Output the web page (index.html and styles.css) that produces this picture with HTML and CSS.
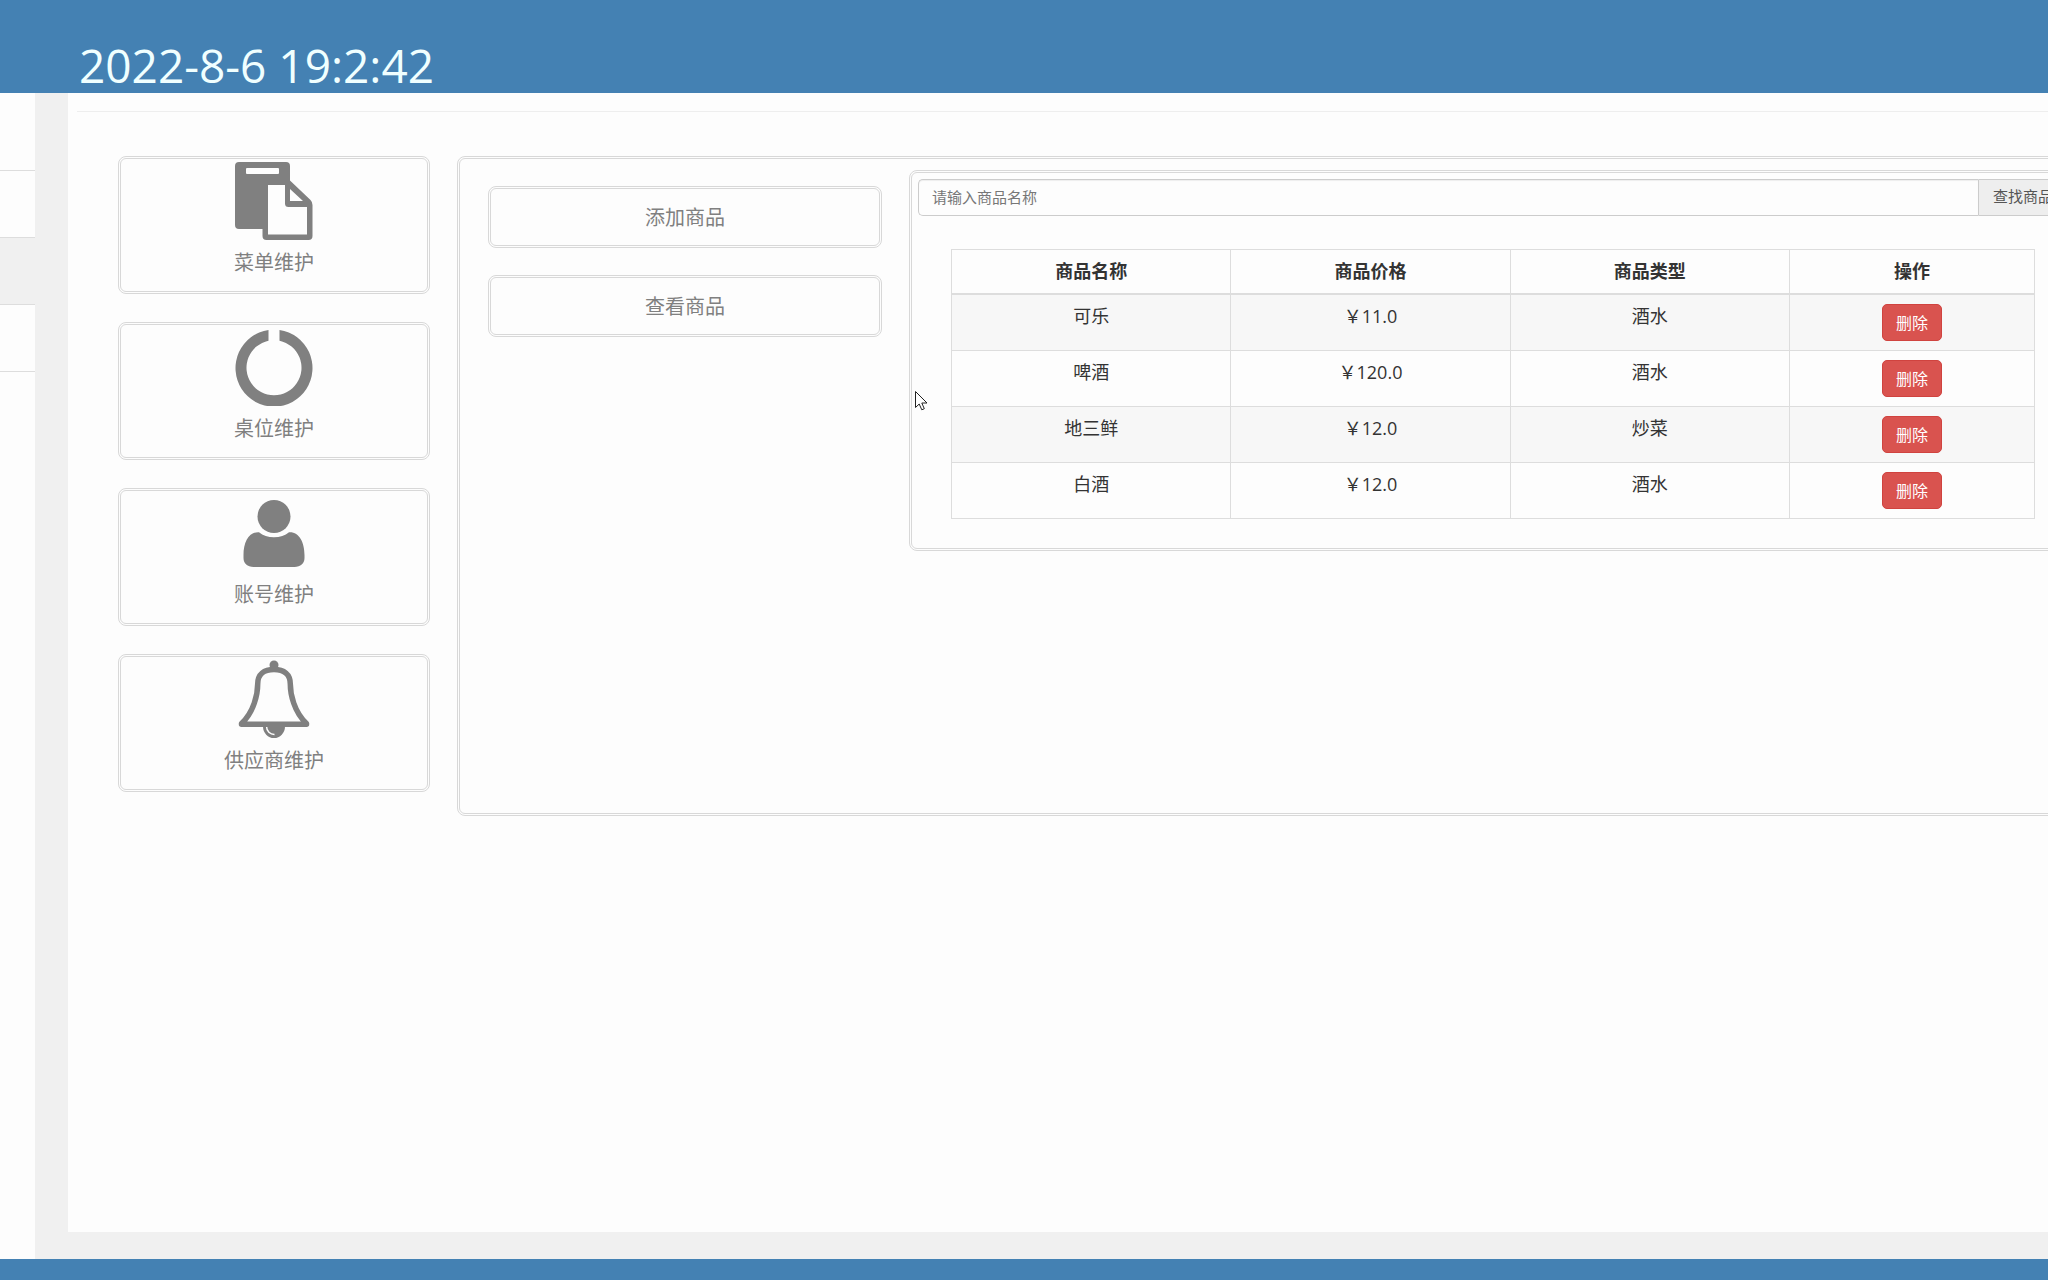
FILE: index.html
```html
<!DOCTYPE html>
<html lang="zh-CN">
<head>
<meta charset="utf-8">
<meta name="viewport" content="width=device-width, initial-scale=1">
<title>商品管理</title>
<link rel="stylesheet" href="styles.css">
</head>
<body>
<header class="topbar"><time class="clock">2022-8-6 19:2:42</time></header>
<div class="body">
  <aside class="sidebar">
    <ul class="side-list">
      <li class="side-item"></li>
      <li class="side-item"></li>
      <li class="side-item active"></li>
      <li class="side-item"></li>
    </ul>
  </aside>
  <main class="main">
    <div class="workspace">
      <nav class="cards">
        <button type="button" class="card">
          <svg class="icon" viewBox="0 0 78 78" aria-hidden="true">
            <path fill-rule="evenodd" d="M4 0H51a4 4 0 0 1 4 4V18.500L75.500 38Q77.500 40 77.500 43V74a4 4 0 0 1-4 4H31.500a4 4 0 0 1-4-4V67H4a4 4 0 0 1-4-4V4a4 4 0 0 1 4-4ZM12 6a1 1 0 0 0-1 1V11a1 1 0 0 0 1 1H43a1 1 0 0 0 1-1V7a1 1 0 0 0-1-1ZM33 23V72.500H72V45H53.500a3.500 3.500 0 0 1-3.500-3.500V23ZM55 27V39H68Z"/>
          </svg>
          <span class="label">菜单维护</span>
        </button>
        <button type="button" class="card">
          <svg class="icon" viewBox="0 0 78 78" aria-hidden="true">
            <path d="M33.500 2A38.500 38.500 0 1 0 44.500 2V12.800A27.500 27.500 0 1 1 33.500 12.800Z"/>
          </svg>
          <span class="label">桌位维护</span>
        </button>
        <button type="button" class="card">
          <svg class="icon" viewBox="0 0 78 78" aria-hidden="true">
            <circle cx="39" cy="22.500" r="16.500"/>
            <path d="M24 38.200C28 41.500 33 43.200 39 43.200S50 41.500 54 38.200C64 37.500 69.500 48 69.500 61V64C69.500 69.500 65.500 73 59.500 73H18.500C12.500 73 8.500 69.500 8.500 64V61C8.500 48 14 37.500 24 38.200Z"/>
          </svg>
          <span class="label">账号维护</span>
        </button>
        <button type="button" class="card">
          <svg class="icon" viewBox="0 0 78 78" aria-hidden="true">
            <circle cx="39" cy="5" r="4.500"/>
            <path class="line" d="M6.500 63.500C19 52 22.700 34 22.700 24C22.700 14 29 9.500 39 9.500S55.300 14 55.300 24C55.300 34 59 52 71.500 63.500V64.300H6.500Z"/>
            <path fill-rule="evenodd" d="M28 66.500H50A11 11.500 0 0 1 28 66.500ZM30.800 66.500A8.500 8.800 0 0 0 39.500 75.200V73.700A7 7.200 0 0 1 32.300 66.500Z"/>
          </svg>
          <span class="label">供应商维护</span>
        </button>
      </nav>
      <section class="panel">
        <div class="actions">
          <button type="button" class="action">添加商品</button>
          <button type="button" class="action">查看商品</button>
        </div>
        <div class="results">
          <form class="search">
            <input class="search-input" type="text" placeholder="请输入商品名称" aria-label="商品名称">
            <button type="button" class="search-button">查找商品</button>
          </form>
          <table class="goods">
            <thead>
              <tr><th>商品名称</th><th>商品价格</th><th>商品类型</th><th class="ops">操作</th></tr>
            </thead>
            <tbody>
              <tr><td>可乐</td><td>￥11.0</td><td>酒水</td><td><button type="button" class="delete">删除</button></td></tr>
              <tr><td>啤酒</td><td>￥120.0</td><td>酒水</td><td><button type="button" class="delete">删除</button></td></tr>
              <tr><td>地三鲜</td><td>￥12.0</td><td>炒菜</td><td><button type="button" class="delete">删除</button></td></tr>
              <tr><td>白酒</td><td>￥12.0</td><td>酒水</td><td><button type="button" class="delete">删除</button></td></tr>
            </tbody>
          </table>
          <svg class="cursor" viewBox="0 0 13 20" aria-hidden="true"><path d="M.5.500V16.500L4.200 13L6.800 18.800L9.300 17.700L6.800 12H12Z"/></svg>
        </div>
      </section>
    </div>
  </main>
</div>
<footer class="bottombar"></footer>
</body>
</html>
```
FILE: styles.css
```css
* { box-sizing: border-box; }

body {
  margin: 0;
  min-height: 100vh;
  display: flex;
  flex-direction: column;
  overflow-x: hidden;
  background: #f0f0f0;
  color: #333;
  font-family: "Open Sans", "Noto Sans CJK SC", sans-serif;
  font-size: 18px;
  line-height: 25px;
}

button, input { font-family: inherit; }

.topbar {
  height: 93px;
  padding: 35px 79px 0;
  background: #4481b3;
}

.clock {
  display: block;
  color: #f0ffff;
  font-size: 46px;
  font-weight: 500;
  line-height: 60px;
}

.body { flex: 1; display: flex; }

.sidebar { width: 35px; background: #fdfdfd; }

.side-list {
  width: 35px;
  margin: 0;
  padding: 11px 0 0;
  list-style: none;
}

.side-item { height: 67px; border-bottom: 1px solid #ddd; }
.side-item.active { background: #f0f0f0; }

.main {
  flex: 1;
  min-width: 0;
  margin: 0 0 27px 33px;
  padding: 18px 0 0 9px;
  overflow: hidden;
  background: #fdfdfd;
}

.workspace {
  display: grid;
  grid-template-columns: 312px 1fr;
  align-items: start;
  gap: 27px;
  margin-right: -43px;
  padding: 44px 0 0 41px;
  border-top: 1px solid #eee;
}

.cards { display: grid; gap: 28px; }

.card, .action, .panel, .results {
  border: 3px double #d8d8d8;
  border-radius: 8px;
  background: #fdfdfd;
}

.card, .action {
  color: #808080;
  font-size: 20px;
  line-height: 28px;
}

.card {
  height: 138px;
  padding: 3px 0 0;
  display: flex;
  flex-direction: column;
  align-items: center;
  gap: 9px;
}

.icon { width: 78px; height: 78px; fill: #808080; }
.line { fill: none; stroke: #808080; stroke-width: 5.5px; stroke-linejoin: round; }

.panel {
  min-height: 660px;
  padding: 11px 11px 11px 28px;
  display: grid;
  grid-template-columns: 394px 1fr;
  align-items: start;
  gap: 27px;
}

.actions { display: grid; gap: 27px; padding-top: 16px; }
.action { height: 62px; padding: 1px 0 0; }

.results { position: relative; padding: 6px 6px 29px; }

.search { display: flex; }

.search-input, .search-button {
  height: 37px;
  padding: 0 13px 2px;
  border: 1px solid #ccc;
  font-size: 15px;
  line-height: 21px;
}

.search-input {
  flex: 1;
  min-width: 0;
  border-right: 0;
  border-radius: 5px 0 0 5px;
  background: #fdfdfd;
  box-shadow: inset 0 1px 1px #eee;
}

.search-input::placeholder { color: #777; opacity: 1; }

.search-button {
  width: 90px;
  border-radius: 0 5px 5px 0;
  background: #eee;
  color: #555;
}

.goods {
  width: calc(100% - 66px);
  margin: 33px 33px 0;
  border-collapse: collapse;
  table-layout: fixed;
  text-align: center;
}

.goods th, .goods td {
  padding: 9px;
  border: 1px solid #ddd;
  vertical-align: top;
}

.goods thead th { border-bottom-width: 2px; }
.goods tbody tr:nth-child(odd) { background: #f7f7f7; }
.ops { width: 245px; }

.delete {
  display: block;
  width: 60px;
  height: 37px;
  margin: 0 auto;
  padding: 0;
  border: 1px solid #d0433f;
  border-radius: 5px;
  background: #d9534f;
  color: #fff;
  font-size: 16px;
  line-height: 24px;
}

.cursor {
  position: absolute;
  left: 3px;
  top: 218px;
  width: 13px;
  height: 20px;
  fill: #fff;
  stroke: #222;
}

.bottombar { height: 21px; background: #4481b3; }
```
